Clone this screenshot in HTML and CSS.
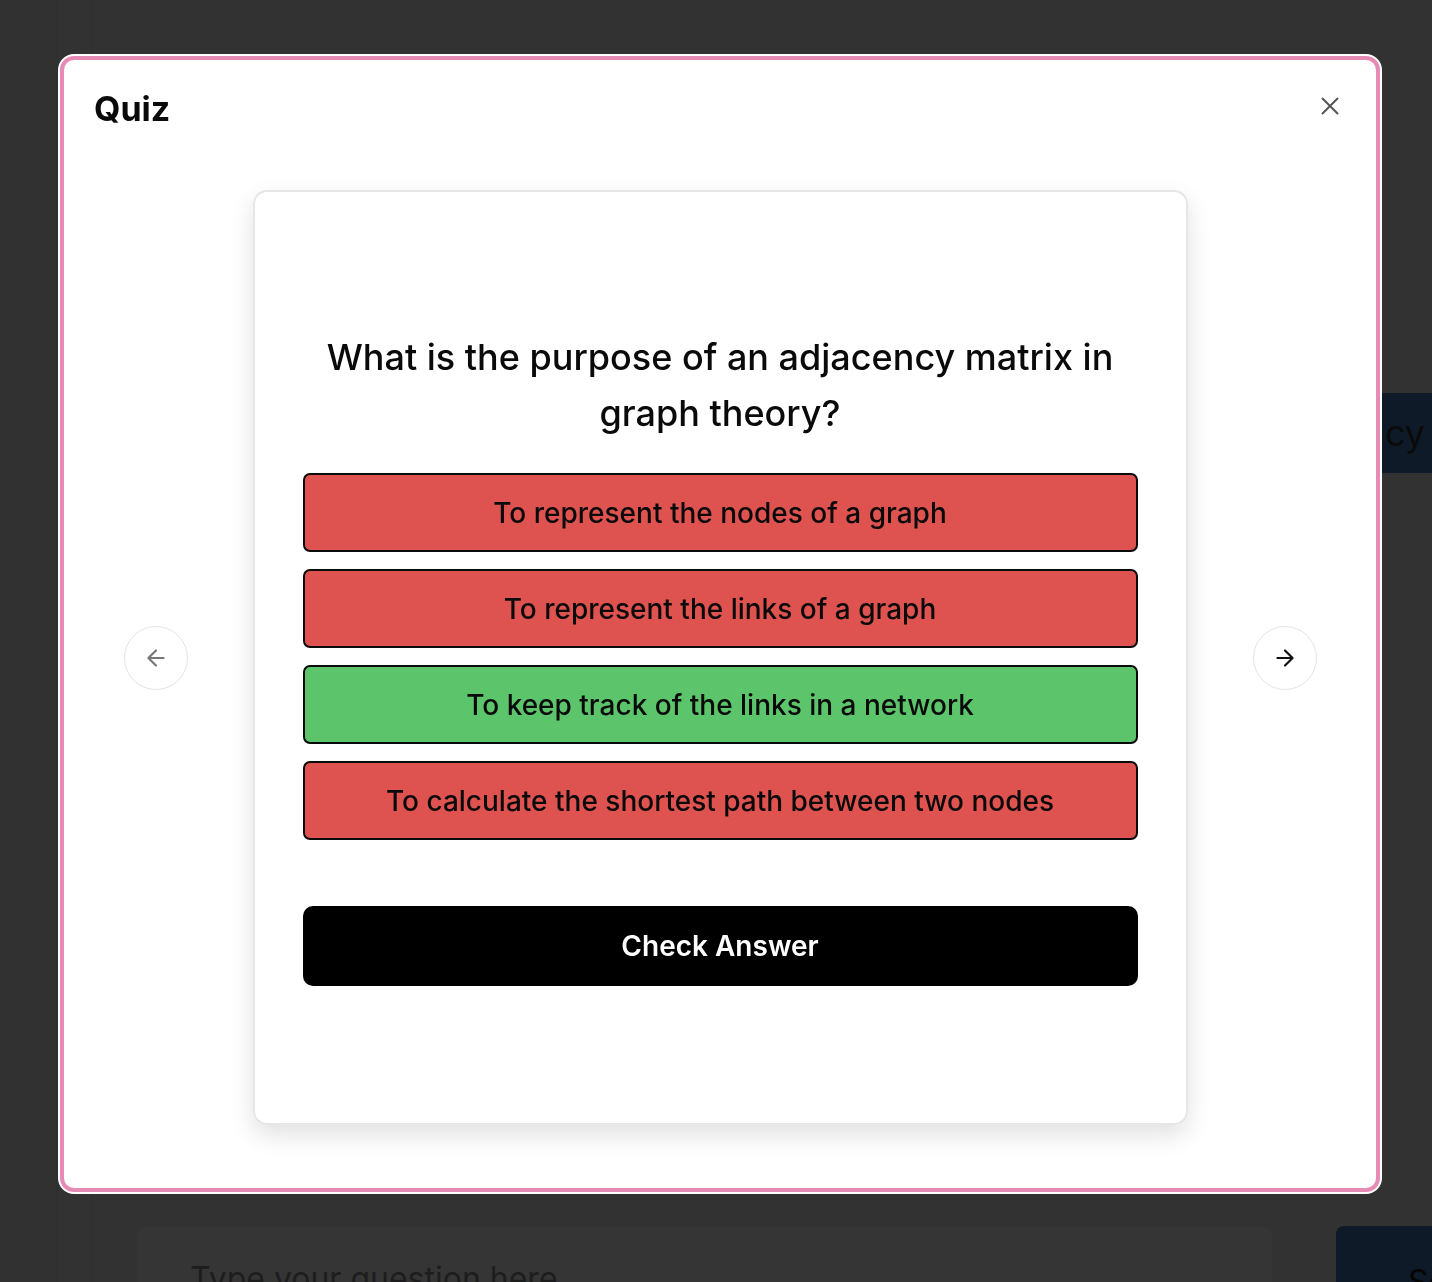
FILE: index.html
```html
<!DOCTYPE html>
<html>
<head>
<meta charset="utf-8">
<link rel="stylesheet" href="styles.css">
</head>
<body>
<div class="page">
  <div class="sidebar"></div>
  <div class="rail"><span class="dots">⋮</span></div>
  <div class="main">
    <div class="messages">
      <div class="bubble">adjacency</div>
    </div>
    <div class="composer">
      <div class="input">Type your question here</div>
      <div class="send">Send</div>
    </div>
  </div>
</div>

<div class="overlay">
  <div class="modal">
    <div class="modal-head">
      <h1 class="title">Quiz</h1>
      <button class="close" aria-label="Close">
        <svg width="24" height="24" viewBox="0 0 24 24" fill="none" stroke="#555" stroke-width="2" stroke-linecap="round"><path d="M4.5 4.5l15 15M19.5 4.5l-15 15"/></svg>
      </button>
    </div>
    <div class="carousel">
      <button class="nav prev" aria-label="Previous">
        <svg width="26" height="26" viewBox="0 0 24 24" fill="none" stroke="#777" stroke-width="2" stroke-linecap="round" stroke-linejoin="round"><path d="M19 12H5M12 19l-7-7 7-7"/></svg>
      </button>
      <div class="card">
        <p class="question">What is the purpose of an adjacency matrix in graph theory?</p>
        <div class="options">
          <div class="option wrong">To represent the nodes of a graph</div>
          <div class="option wrong">To represent the links of a graph</div>
          <div class="option right">To keep track of the links in a network</div>
          <div class="option wrong">To calculate the shortest path between two nodes</div>
        </div>
        <button class="check">Check Answer</button>
      </div>
      <button class="nav next" aria-label="Next">
        <svg width="26" height="26" viewBox="0 0 24 24" fill="none" stroke="#111" stroke-width="2" stroke-linecap="round" stroke-linejoin="round"><path d="M5 12h14M12 5l7 7-7 7"/></svg>
      </button>
    </div>
  </div>
</div>
</body>
</html>
```

FILE: styles.css
```css
* { box-sizing: border-box; }
html, body { margin: 0; height: 100%; }
body {
  background: #313231;
  font-family: Inter, "Noto Sans", "Liberation Sans", sans-serif;
  overflow: hidden;
}
.page {
  display: flex;
  height: 1282px;
}
.sidebar {
  flex: 0 0 58px;
  border-right: 1px solid #2c2d2c;
  background: #303130;
}
.rail {
  flex: 0 0 34px;
  border-right: 1px solid #2d2e2d;
  position: relative;
}
.dots {
  position: absolute;
  left: -7px;
  top: 609px;
  color: #050505;
  font-size: 18px;
  font-weight: 700;
}
.main {
  flex: 1;
  min-width: 0;
  display: flex;
  flex-direction: column;
}
.messages {
  flex: 1;
  display: flex;
  flex-direction: column;
  align-items: flex-end;
  padding-top: 393px;
}
.bubble {
  background: #0e1a27;
  color: #0a0a0a;
  font-size: 36px;
  height: 80px;
  line-height: 80px;
  padding: 0 7px 0 40px;
}
.composer {
  display: flex;
  gap: 64px;
  padding: 0 0 0 45px;
  height: 56px;
  align-items: flex-start;
  overflow: hidden;
}
.input {
  flex: 0 0 1135px;
  height: 80px;
  background: #353535;
  border: 1px solid #343434;
  border-radius: 8px;
  color: #1d1d1d;
  font-size: 32px;
  line-height: 40px;
  padding: 32px 0 0 52px;
  white-space: nowrap;
}
.send {
  flex: 1;
  height: 80px;
  background: #0e1a27;
  border-radius: 8px 0 0 0;
  color: #050505;
  font-size: 32px;
  line-height: 40px;
  padding: 36px 0 0 72px;
  overflow: hidden;
  white-space: nowrap;
}

.overlay {
  position: fixed;
  inset: 0;
  padding: 56px 52px 90px 60px;
}
.modal {
  width: 1320px;
  height: 1136px;
  background: #fff;
  border: 4px solid #e68ab6;
  border-radius: 14px;
  box-shadow: 0 0 0 2px #fff;
  display: flex;
  flex-direction: column;
  padding: 26px 30px 0 30px;
}
.modal-head {
  display: flex;
  justify-content: space-between;
  align-items: flex-start;
}
.title {
  margin: 0;
  font-size: 34px;
  font-weight: 700;
  color: #0a0a0a;
  line-height: 46px;
}
.close {
  background: none;
  border: 0;
  padding: 0;
  margin: 8px 4px 0 0;
  cursor: pointer;
  display: flex;
}
.carousel {
  display: flex;
  align-items: center;
  justify-content: center;
  gap: 65px;
  margin-top: 58px;
}
.nav {
  width: 64px;
  height: 64px;
  border-radius: 50%;
  background: #fff;
  border: 1.5px solid #e4e4e4;
  display: flex;
  align-items: center;
  justify-content: center;
  padding: 0;
}
.card {
  width: 935px;
  height: 935px;
  border: 2px solid #e6e6e6;
  border-radius: 14px;
  box-shadow: 0 10px 24px rgba(0,0,0,0.12);
  display: flex;
  flex-direction: column;
  justify-content: center;
  padding: 0 48px;
}
.question {
  margin: 0 0 32px;
  text-align: center;
  font-size: 36px;
  font-weight: 500;
  line-height: 56px;
  color: #0a0a0a;
  padding: 0 10px;
}
.options {
  display: flex;
  flex-direction: column;
  gap: 17px;
}
.option {
  height: 79px;
  border: 2px solid #0a0a0a;
  border-radius: 7px;
  display: flex;
  align-items: center;
  justify-content: center;
  font-size: 28px;
  font-weight: 500;
  color: #0a0a0a;
}
.wrong { background: #de534f; }
.right { background: #5cc46a; }
.check {
  margin-top: 66px;
  height: 80px;
  border: 0;
  border-radius: 10px;
  background: #000;
  color: #fff;
  font-family: inherit;
  font-size: 28px;
  font-weight: 600;
}
```
